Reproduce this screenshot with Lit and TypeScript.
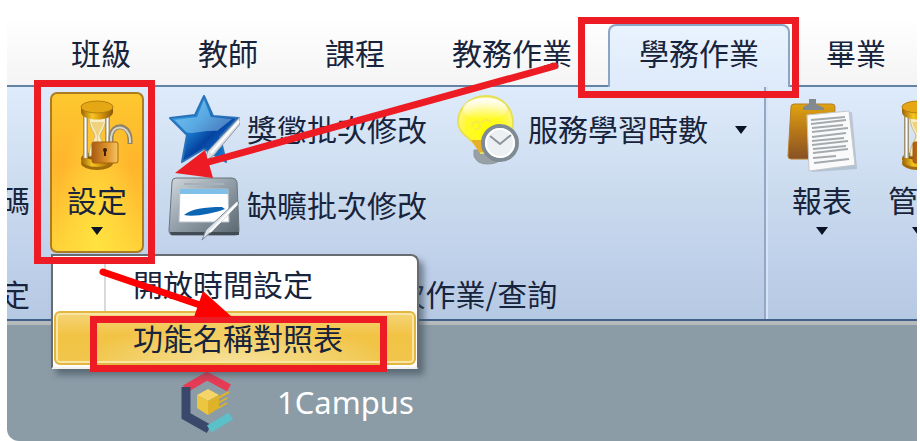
import { LitElement, html, css, svg, nothing } from "lit";
import { customElement, property } from "lit/decorators.js";

const icons: Record<string, unknown> = {
  hourglass: svg`
    <defs>
      <linearGradient id="gold" x1="0" x2="1"><stop offset="0" stop-color="#9a6206"/><stop offset=".35" stop-color="#f6c522"/><stop offset=".6" stop-color="#d99a0c"/><stop offset="1" stop-color="#8a5806"/></linearGradient>
      <linearGradient id="lock" x1="0" x2="1"><stop offset="0" stop-color="#a95a14"/><stop offset=".6" stop-color="#e0952c"/><stop offset="1" stop-color="#f3c566"/></linearGradient>
      <linearGradient id="rod" x1="0" x2="1"><stop offset="0" stop-color="#85764c"/><stop offset=".5" stop-color="#fff"/><stop offset="1" stop-color="#87795a"/></linearGradient>
    </defs>
    <g transform="translate(8 0)">
    <ellipse cx="28" cy="65" rx="16" ry="7" fill="#a06c0c"/>
    <ellipse cx="28" cy="61" rx="16" ry="8" fill="url(#gold)"/>
    <ellipse cx="28" cy="58" rx="12" ry="4" fill="#8a5a08"/>
    <path d="M20 18h17c0 12-5 15-6 20 1 5 6 9 6 20H20c0-11 5-15 6-20-1-5-6-8-6-20z" fill="#f7edc6" stroke="#c9b67a"/>
    <path d="M22 24h13c-2 7-5 9-6 15h-1c-1-6-4-8-6-15zM28 39h1l1 9 5 9H22l5-9z" fill="#efd27e"/>
    <rect x="14" y="16" width="5" height="44" fill="url(#rod)"/><rect x="36" y="16" width="5" height="42" fill="url(#rod)"/>
    <path d="M12 9h32v5c0 10-32 10-32 0z" fill="url(#gold)"/>
    <ellipse cx="28" cy="9" rx="16" ry="6" fill="#e5a814" stroke="#b57f10"/>
    <path d="M42 46v-7c1-14 18-14 19 2v5" fill="none" stroke="#8d8468" stroke-width="5"/>
    <path d="M42 46v-7c1-13 17-13 19 2v4" fill="none" stroke="#d8d4c8" stroke-width="2"/>
    <rect x="23" y="44" width="26" height="21" rx="2" fill="url(#lock)" stroke="#a7620c"/>
    <circle cx="36" cy="52" r="2" fill="#3a2005"/><path d="M35 52h2v6h-2z" fill="#3a2005"/>
    </g>`,
  star: svg`
    <defs><linearGradient id="blue" x1="0" y1="0" x2="1" y2="1"><stop offset="0" stop-color="#63c0f4"/><stop offset=".4" stop-color="#1a80d0"/><stop offset=".6" stop-color="#0642a0"/><stop offset="1" stop-color="#1b9af0"/></linearGradient></defs>
    <path d="M36 4l9 20 25 2-18 19 6 25-22-13-22 13 5-27L2 26l25-3z" fill="url(#blue)" stroke="#2a72b8" stroke-width="2" stroke-linejoin="round"/>
    <path d="M36 8l7 17 21 2-15 12c-13-1-24 4-31 1L7 28l22-3z" fill="#a7dcf8" opacity=".45"/>
    <path d="M72 32L46 63l-10 7 4-11 32-34z" fill="#d9dee3" stroke="#8b98a5"/>
    <path d="M71 29L43 61" stroke="#fff" stroke-width="2"/>`,
  tablet: svg`
    <defs><linearGradient id="steel" x1="0" y1="0" x2="1" y2="1"><stop offset="0" stop-color="#d2d8dd"/><stop offset=".5" stop-color="#909ca6"/><stop offset="1" stop-color="#59656f"/></linearGradient></defs>
    <g transform="translate(0 9)">
    <path d="M4 5q0-4 4-4h56q4 0 5 4l2 48q0 5-4 5H5q-4 0-4-5z" fill="url(#steel)" stroke="#69757f"/>
    <path d="M2 55h69v3H3z" fill="#414b54"/><path d="M16 7h40" stroke="#a7b1b9" stroke-width="2"/>
    <path d="M12 12h48l1 33H11z" fill="#fff" stroke="#b9c4ca"/><path d="M12 12h48v5H12z" fill="#7fc0ea"/>
    <path d="M16 38c7-6 20-8 38-8l3 2c-13 5-31 8-41 6z" fill="#0c66b4"/>
    <path d="M71 26L45 53l-11 10 4-10 31-29z" fill="#dfe4e8" stroke="#7d8a96"/><path d="M69 27L42 55" stroke="#fff" stroke-width="2"/>
    </g>`,
  bulb: svg`
    <defs>
      <radialGradient id="glow" cx=".5" cy=".6" r=".6"><stop offset="0" stop-color="#ffff00"/><stop offset=".6" stop-color="#fff92e"/><stop offset="1" stop-color="#fff59a"/></radialGradient>
      <linearGradient id="shine" x1="0" y1="0" x2="0" y2="1"><stop offset="0" stop-color="#fff"/><stop offset="1" stop-color="#fff" stop-opacity="0"/></linearGradient>
    </defs>
    <path d="M25 58h24l2 10q-4 4-13 4-10 0-13-8z" fill="#98a0a5" stroke="#8d979e"/>
    <path d="M37 4c16 0 27 12 27 27 0 14-11 19-14 30H32c-2-7-7-9-14-16C10 39 9 34 9 30 9 16 21 4 37 4z" fill="url(#glow)" stroke="#e6df5a" stroke-width="2"/>
    <ellipse cx="36" cy="17" rx="22" ry="11" fill="url(#shine)"/>
    <path d="M23 35c0-7 8-7 8-1 0 4-5 3-5 3M33 31c2-4 8-4 8 0" fill="none" stroke="#f8ea4e" stroke-width="2"/>
    <path d="M22 48l8 12h6l-2-12z" fill="#e6b02a"/>
    <circle cx="51" cy="51" r="17" fill="#edf0f2" stroke="#7f8b94" stroke-width="4"/>
    <circle cx="51" cy="51" r="14" fill="none" stroke="#fff" stroke-width="2"/>
    <path d="M41 44l10 8 11-9" fill="none" stroke="#8a949a" stroke-width="2"/>`,
  clipboard: svg`
    <defs><linearGradient id="board" x1="0" y1="0" x2="0" y2="1"><stop offset="0" stop-color="#dfa40f"/><stop offset=".5" stop-color="#b67618"/><stop offset="1" stop-color="#875126"/></linearGradient></defs>
    <path d="M5 9q0-3 3-3h38q3 0 3 3l-2 52H5q-3 0-3-3z" fill="url(#board)" stroke="#b57f2a"/>
    <path d="M17 9l6-3V1h7v5l8 4v2H17z" fill="#818991"/>
    <path d="M24 17l42-3 5 57-45 3z" fill="#75818d" opacity=".3"/>
    <path d="M21 17l42-4 6 54-46 6z" fill="#fafafa" stroke="#c4c8cb"/>
    <path d="M25 22l34-3M25 26l35-4M26 30l31-3M26 34l36-4M26 39l34-4M26 43l32-3M26 47l36-4M27 51l33-3M27 55l35-4M27 60l23-2M28 65l35-4" stroke="#a5aaae" stroke-width="2"/>`,
};

@customElement("ribbon-icon")
class RibbonIcon extends LitElement {
  @property() name = "";
  static styles = css`
    :host { display: block; flex: none; width: 72px; height: 76px; }
    svg { display: block; }
  `;
  render() {
    return html`<svg width="72" height="76" viewBox="0 0 72 76" aria-hidden="true">${icons[this.name]}</svg>`;
  }
}

@customElement("app-root")
class AppRoot extends LitElement {
  static styles = css`
    :host {
      display: block;
      position: relative;
      overflow: hidden;
      background: #fff;
      font: 30px/34px "Noto Sans CJK TC", sans-serif;
      color: #18243c;
    }
    * { box-sizing: border-box; }
    button {
      font: inherit; color: inherit; background: none; border: 0;
      padding: 0; margin: 0; white-space: nowrap;
    }
    .window {
      margin: 0 3px 0 7px;
      min-height: 100vh;
      overflow: hidden;
      border-radius: 0 0 0 12px;
      background: #8b9ca7;
    }
    .tabs {
      display: flex; align-items: stretch; gap: 5px;
      padding: 24px 0 0 33px;
      background: linear-gradient(#fff 20%, #f4f4f4);
      border-bottom: 2px solid #6482a3;
    }
    .tab {
      flex: none; height: 61px; padding: 0 29px 8px;
      border: 2px solid transparent; border-bottom: 0;
    }
    .tab.active {
      position: relative; height: 63px; margin-bottom: -2px; padding-bottom: 10px;
      border-color: #8ba6c5; border-radius: 8px 8px 0 0;
      background: linear-gradient(#e9f3fe, #deeafa);
    }
    .ribbon {
      display: flex;
      background: linear-gradient(#deebfb, #cbdbee 45%, #c1d2eb 70%, #b6c9e3);
      border-bottom: 2px solid #42618a;
      box-shadow: 0 4px 0 #b5babd;
    }
    .group { flex: none; padding: 5px 0 9px; }
    .group + .group { padding-left: 20px; }
    .group.reports { border-left: 2px solid #91a8cb; box-shadow: inset 2px 0 0 #d7e2f2; padding-left: 9px; }
    .group.batch { padding-right: 17px; }
    .body { display: flex; align-items: flex-start; min-height: 161px; }
    .caption { margin-top: 23px; text-align: center; }
    .batch .caption { padding-left: 8px; }
    .edge { display: flex; justify-content: flex-end; width: 23px; }
    .code { margin-top: 90px; margin-right: 20px; }
    .large {
      flex: none; display: flex; flex-direction: column; align-items: center;
      width: 94px; height: 161px; padding-top: 4px; border: 2px solid transparent;
    }
    .large span { margin: 8px 0 11px; }
    .large.open {
      border-color: #ad7b22; border-radius: 7px;
      background: radial-gradient(ellipse at 50% 100%, #ffe240, transparent 65%), linear-gradient(#fdc82f, #ffb52c 45%, #ffd33a);
    }
    .holder { margin-right: 4px; }
    .arrow { width: 12px; height: 8px; background: #0a1226; clip-path: polygon(0 0, 100% 0, 50% 100%); }
    .reports .body { gap: 2px; }
    .commands { display: grid; grid-template-columns: auto auto; column-gap: 22px; }
    .command { display: flex; align-items: center; gap: 7px; height: 76px; }
    .command span { padding-bottom: 5px; }
    .command .arrow { margin-left: 20px; }
    .menu {
      position: absolute; z-index: 2; left: 51px; top: 254px; width: 368px;
      padding: 1px 1px 2px; background: #fff;
      border: 2px solid #666c70; border-bottom-color: #f2f2ee; border-radius: 0 8px 3px 0;
      box-shadow: 5px 6px 6px #3e4d5999;
    }
    .item { display: block; width: 100%; height: 54px; padding: 0 0 3px 79px; text-align: left; }
    .item:first-child { background: linear-gradient(#d8dadd, #d8dadd) 50px 0 / 2px 100% no-repeat; }
    .item.selected {
      border: 2px solid #e3b63f; border-radius: 6px; padding-left: 77px;
      box-shadow: inset 0 0 0 2px #f9e5a5;
      background: radial-gradient(ellipse at 50% 100%, #f7e29a, transparent 60%), linear-gradient(#f5d477, #f2c344 45%, #f0c64c);
    }
    .campus { display: flex; align-items: center; gap: 44px; padding: 49px 0 0 174px; }
    .campus span { font-family: "Noto Sans", sans-serif; font-size: 31px; color: #fff; }
    .marks { position: absolute; z-index: 3; left: 0; top: 0; pointer-events: none; }
  `;

  private tabs = ["班級", "教師", "課程", "教務作業", "學務作業", "畢業"];

  private large(label: string, icon: string, open = false) {
    return html`<button class="large ${open ? "open" : ""}" aria-expanded=${open}>
      <ribbon-icon name=${icon}></ribbon-icon><span>${label}</span><i class="arrow"></i>
    </button>`;
  }

  private command(label: string, icon: string, arrow = false) {
    return html`<button class="command">
      <ribbon-icon name=${icon}></ribbon-icon><span>${label}</span>${arrow ? html`<i class="arrow"></i>` : nothing}
    </button>`;
  }

  render() {
    return html`
      <main class="window">
        <nav class="tabs">
          ${this.tabs.map((t) => html`<button class="tab ${t === "學務作業" ? "active" : ""}">${t}</button>`)}
        </nav>
        <section class="ribbon">
          <div class="group">
            <div class="body">
              <div class="edge code">碼</div>
              <div class="holder">${this.large("設定", "hourglass", true)}</div>
            </div>
            <div class="caption edge">定</div>
          </div>
          <div class="group batch">
            <div class="body">
              <div class="commands">
                ${this.command("獎懲批次修改", "star")}
                ${this.command("服務學習時數", "bulb", true)}
                ${this.command("缺曠批次修改", "tablet")}
              </div>
            </div>
            <div class="caption">批次作業/查詢</div>
          </div>
          <div class="group reports">
            <div class="body">${this.large("報表", "clipboard")}${this.large("管理", "hourglass")}</div>
          </div>
        </section>
        <footer class="campus">
          <svg width="52" height="64" viewBox="0 0 52 64" aria-hidden="true">
            <path d="M4 19L26 6l22 12" fill="none" stroke="#e53b55" stroke-width="8"/>
            <path d="M5 17v29l23 13" fill="none" stroke="#3a486b" stroke-width="9"/>
            <path d="M28 59l22-13" fill="none" stroke="#5bc0c8" stroke-width="8"/>
            <path d="M16 25l11-6 11 6-11 6z" fill="#f5d468"/>
            <path d="M16 25l11 6v14l-11-7z" fill="#ecc63e"/>
            <path d="M27 31l11-6v13l-11 7z" fill="#dfb329"/>
            <path d="M37 28l11-6M37 33l9-5M37 38l9-5" stroke="#dfb329" stroke-width="2"/>
          </svg>
          <span>1Campus</span>
        </footer>
      </main>
      <div class="menu" role="menu">
        <button class="item" role="menuitem">開放時間設定</button>
        <button class="item selected" role="menuitem">功能名稱對照表</button>
      </div>
      <svg class="marks" width="920" height="441" viewBox="0 0 920 441" aria-hidden="true">
        <g fill="none" stroke="#ed1c24" stroke-width="7">
          <rect x="37.5" y="83.5" width="114" height="177"/>
          <rect x="581.5" y="20.5" width="214" height="74"/>
          <rect x="93.5" y="319.5" width="290" height="49"/>
          <path d="M555 66L205 163" stroke-linecap="round"/>
        </g>
        <path d="M175 173l30-23 8 28z" fill="#ed1c24"/>
        <path d="M103 272l97 33" stroke="#f00" stroke-width="7" stroke-linecap="round"/>
        <path d="M232 317l-29-26-9 26z" fill="#f00"/>
      </svg>`;
  }
}
